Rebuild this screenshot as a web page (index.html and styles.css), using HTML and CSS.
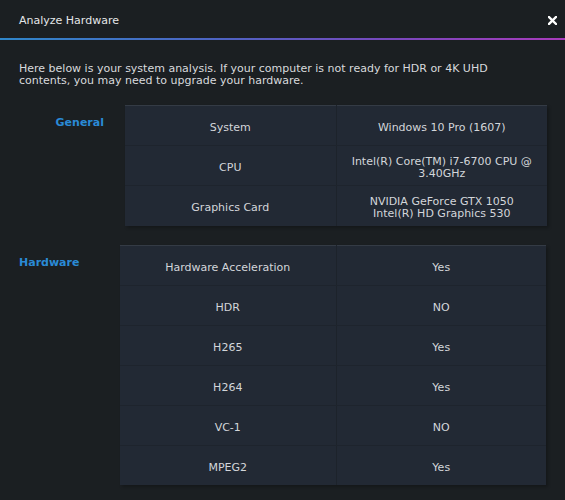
FILE: index.html
```html
<!DOCTYPE html>
<html>
<head>
    <title>Analyze Hardware</title>
    <link rel="stylesheet" href="styles.css">
</head>
<body>
    <div class="dialog">
        <div class="title-bar">
            <span class="title">Analyze Hardware</span>
            <svg class="close" width="9" height="9" viewBox="0 0 9 9">
                <path d="M1 1 L8 8 M8 1 L1 8" stroke="#ffffff" stroke-width="2.4" stroke-linecap="square"/>
            </svg>
        </div>
        <div class="accent-line"></div>

        <p class="intro">Here below is your system analysis. If your computer is not ready for HDR or 4K UHD<br>contents, you may need to upgrade your hardware.</p>

        <div class="section general">
            <div class="section-label">General</div>
            <table class="info-table">
                <tr>
                    <td>System</td>
                    <td>Windows 10 Pro (1607)</td>
                </tr>
                <tr>
                    <td>CPU</td>
                    <td>Intel(R) Core(TM) i7-6700 CPU @<br>3.40GHz</td>
                </tr>
                <tr>
                    <td>Graphics Card</td>
                    <td>NVIDIA GeForce GTX 1050<br>Intel(R) HD Graphics 530</td>
                </tr>
            </table>
        </div>

        <div class="section hardware">
            <div class="section-label">Hardware</div>
            <table class="info-table">
                <tr>
                    <td>Hardware Acceleration</td>
                    <td>Yes</td>
                </tr>
                <tr>
                    <td>HDR</td>
                    <td>NO</td>
                </tr>
                <tr>
                    <td>H265</td>
                    <td>Yes</td>
                </tr>
                <tr>
                    <td>H264</td>
                    <td>Yes</td>
                </tr>
                <tr>
                    <td>VC-1</td>
                    <td>NO</td>
                </tr>
                <tr>
                    <td>MPEG2</td>
                    <td>Yes</td>
                </tr>
            </table>
        </div>
    </div>
</body>
</html>
```

FILE: styles.css
```css
html, body {
    margin: 0;
    padding: 0;
    background: #1b1f22;
}

body {
    font-family: "DejaVu Sans", Verdana, sans-serif;
    font-size: 11px;
    color: #d6d9dd;
}

.dialog {
    width: 565px;
    height: 500px;
    overflow: hidden;
}

.title-bar {
    display: flex;
    align-items: center;
    justify-content: space-between;
    height: 38px;
    padding: 0 8px 0 19px;
    box-sizing: border-box;
}

.title {
    color: #e4e6e8;
    padding-top: 2px;
}

.close {
    display: block;
    margin-top: 2px;
}

.accent-line {
    height: 2px;
    background: linear-gradient(to right, #2f86c9 0%, #4f62c2 40%, #7a47bd 70%, #a83bbb 100%);
}

.intro {
    margin: 23px 0 0 19px;
    line-height: 12px;
    color: #d8dadd;
}

.section {
    display: flex;
    align-items: flex-start;
}

.general {
    margin-top: 18px;
}

.hardware {
    margin-top: 19px;
}

.section-label {
    color: #2a8ad6;
    font-weight: bold;
    padding-top: 11px;
    box-sizing: border-box;
}

.general .section-label {
    width: 125px;
    padding-right: 21px;
    text-align: right;
}

.hardware .section-label {
    width: 120px;
    padding-left: 19px;
}

.info-table {
    border-collapse: collapse;
    table-layout: fixed;
    background: #222934;
    border-top: 1px solid #343b45;
    box-shadow: 2px 2px 3px rgba(0, 0, 0, 0.25);
}

.general .info-table {
    width: 422px;
}

.hardware .info-table {
    width: 426px;
}

.info-table td {
    height: 40px;
    padding: 5px 8px 0;
    text-align: center;
    vertical-align: middle;
    line-height: 12px;
    color: #d3d6da;
    border-bottom: 1px solid #1e242d;
    box-sizing: border-box;
}

.info-table tr:last-child td {
    border-bottom: none;
}

.info-table td:first-child {
    border-right: 1px solid #1d232b;
}

.general .info-table td:first-child {
    width: 211px;
}

.hardware .info-table td:first-child {
    width: 216px;
}
```
